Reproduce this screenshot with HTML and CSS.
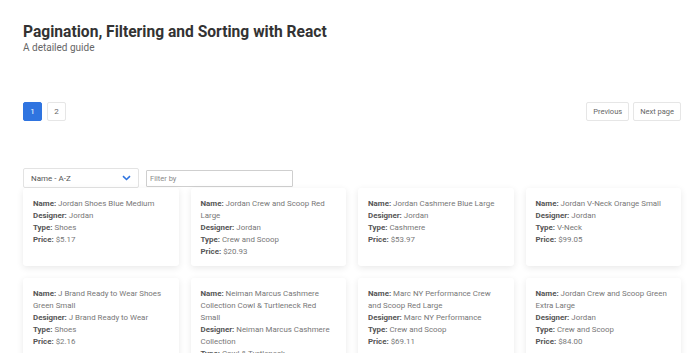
FILE: index.html
```html
<!DOCTYPE html>
<html lang="en">
<head>
    <meta charset="UTF-8">
    <meta name="viewport" content="width=device-width, initial-scale=1.0">
    <title>Pagination, Filtering and Sorting with React</title>
    <link rel="stylesheet" href="styles.css">
</head>
<body>
    <div class="page">
        <header class="header">
            <h1 class="title">Pagination, Filtering and Sorting with React</h1>
            <p class="subtitle">A detailed guide</p>
        </header>

        <div class="pager">
            <div class="pages">
                <button class="page-btn active">1</button>
                <button class="page-btn">2</button>
            </div>
            <div class="nav">
                <button class="nav-btn">Previous</button>
                <button class="nav-btn">Next page</button>
            </div>
        </div>

        <div class="controls">
            <div class="sort-select">
                <span>Name - A-Z</span>
                <svg class="chevron" width="9" height="6" viewBox="0 0 9 6"><path d="M1 1.2 L4.5 4.5 L8 1.2" fill="none" stroke="#2f74e0" stroke-width="1.6"/></svg>
            </div>
            <input class="filter-input" type="text" placeholder="Filter by">
        </div>

        <div class="products">
            <div class="card">
                <div><b>Name:</b> Jordan Shoes Blue Medium</div>
                <div><b>Designer:</b> Jordan</div>
                <div><b>Type:</b> Shoes</div>
                <div><b>Price:</b> $5.17</div>
            </div>
            <div class="card">
                <div><b>Name:</b> Jordan Crew and Scoop Red Large</div>
                <div><b>Designer:</b> Jordan</div>
                <div><b>Type:</b> Crew and Scoop</div>
                <div><b>Price:</b> $20.93</div>
            </div>
            <div class="card">
                <div><b>Name:</b> Jordan Cashmere Blue Large</div>
                <div><b>Designer:</b> Jordan</div>
                <div><b>Type:</b> Cashmere</div>
                <div><b>Price:</b> $53.97</div>
            </div>
            <div class="card">
                <div><b>Name:</b> Jordan V-Neck Orange Small</div>
                <div><b>Designer:</b> Jordan</div>
                <div><b>Type:</b> V-Neck</div>
                <div><b>Price:</b> $99.05</div>
            </div>
            <div class="card">
                <div><b>Name:</b> J Brand Ready to Wear Shoes Green Small</div>
                <div><b>Designer:</b> J Brand Ready to Wear</div>
                <div><b>Type:</b> Shoes</div>
                <div><b>Price:</b> $2.16</div>
            </div>
            <div class="card">
                <div><b>Name:</b> Neiman Marcus Cashmere Collection Cowl &amp; Turtleneck Red Small</div>
                <div><b>Designer:</b> Neiman Marcus Cashmere Collection</div>
                <div><b>Type:</b> Cowl &amp; Turtleneck</div>
                <div><b>Price:</b> $41.20</div>
            </div>
            <div class="card">
                <div><b>Name:</b> Marc NY Performance Crew and Scoop Red Large</div>
                <div><b>Designer:</b> Marc NY Performance</div>
                <div><b>Type:</b> Crew and Scoop</div>
                <div><b>Price:</b> $69.11</div>
            </div>
            <div class="card">
                <div><b>Name:</b> Jordan Crew and Scoop Green Extra Large</div>
                <div><b>Designer:</b> Jordan</div>
                <div><b>Type:</b> Crew and Scoop</div>
                <div><b>Price:</b> $84.00</div>
            </div>
        </div>
    </div>
</body>
</html>
```

FILE: styles.css
```css
body {
    font-family: Roboto, "Liberation Sans", Arial, sans-serif;
    background-color: #fff;
    color: #333;
    margin: 0;
    padding: 0;
}

.page {
    padding: 23px 19px 0 23px;
}

.title {
    font-size: 15.6px;
    line-height: 19px;
    font-weight: 700;
    color: #333;
    margin: 0;
}

.subtitle {
    font-size: 10px;
    line-height: 12px;
    color: #666;
    margin: 0;
}

.pager {
    display: flex;
    justify-content: space-between;
    align-items: center;
    margin-top: 48px;
}

.pages,
.nav {
    display: flex;
    gap: 4px;
}

.page-btn,
.nav-btn {
    font-family: inherit;
    height: 19px;
    padding: 0;
    background-color: #fff;
    border: 1px solid #e6e6e6;
    border-radius: 2px;
    color: #666;
    font-size: 8px;
    cursor: pointer;
}

.page-btn {
    width: 19px;
    margin-right: 1px;
}

.page-btn.active {
    background-color: #2f74e0;
    border-color: #2f74e0;
    color: #fff;
}

.nav-btn {
    padding: 0 6px;
    font-size: 7.5px;
}

.controls {
    display: flex;
    align-items: center;
    gap: 7px;
    margin-top: 47px;
}

.sort-select {
    width: 116px;
    height: 20px;
    box-sizing: border-box;
    border: 1px solid #e3e3e3;
    border-radius: 2px;
    display: flex;
    align-items: center;
    justify-content: space-between;
    padding: 0 7px 0 7px;
    font-size: 8px;
    color: #555;
}

.chevron {
    display: block;
}

.filter-input {
    width: 147px;
    height: 17px;
    box-sizing: border-box;
    border: 1px solid #cfcfcf;
    border-radius: 1px;
    padding: 0 3px;
    font-family: inherit;
    font-size: 7.5px;
    color: #555;
    outline: none;
}

.filter-input::placeholder {
    color: #8a8a8a;
}

.products {
    display: grid;
    grid-template-columns: repeat(4, 1fr);
    gap: 12px;
}

.card {
    background-color: #fff;
    border-radius: 3px;
    box-shadow: 0 2px 7px rgba(0, 0, 0, 0.09);
    padding: 10px 10px 8px 10px;
    font-size: 7.9px;
    line-height: 12px;
    color: #777;
}

.card b {
    color: #555;
    font-weight: 700;
}
```
